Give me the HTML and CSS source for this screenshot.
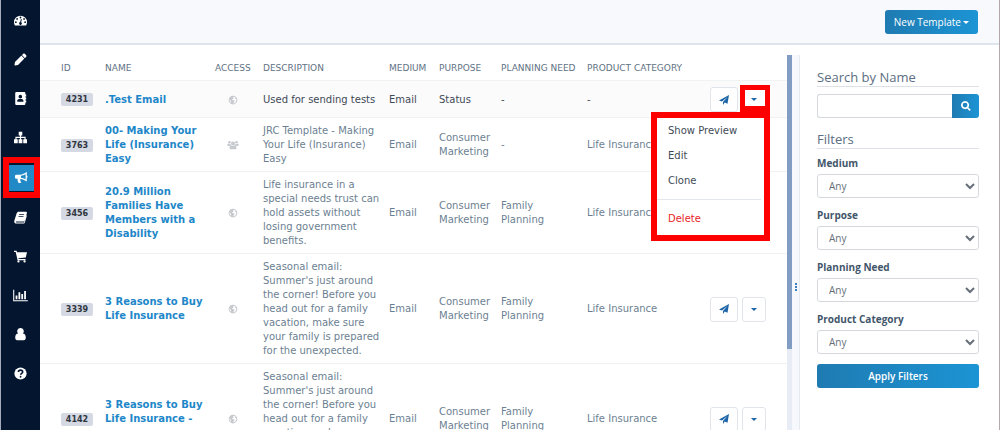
FILE: index.html
```html
<!DOCTYPE html>
<html lang="en">
<head>
<meta charset="utf-8">
<title>Templates</title>
<link rel="stylesheet" href="styles.css">
</head>
<body>
<svg class="sprite" aria-hidden="true">
  <symbol id="i-gauge" viewBox="0 0 16 16"><path fill-rule="evenodd" d="M8 2a8 8 0 0 0-8 8c0 1.500.4 2.900 1.100 4h13.800c.7-1.100 1.100-2.500 1.100-4a8 8 0 0 0-8-8zM8 3.200a1.100 1.100 0 1 1 0 2.200 1.100 1.100 0 0 1 0-2.200zM3.800 5a1.100 1.100 0 1 1 0 2.200 1.100 1.100 0 0 1 0-2.200zM12.400 5a1.100 1.100 0 1 1 0 2.200 1.100 1.100 0 0 1 0-2.200zM2.300 9a1.100 1.100 0 1 1 0 2.200 1.100 1.100 0 0 1 0-2.200zM13.700 9a1.100 1.100 0 1 1 0 2.200 1.100 1.100 0 0 1 0-2.200zM8.500 6.300l1.100.3-.8 3.500a1.700 1.700 0 1 1-1.200-.2z"/></symbol>
  <symbol id="i-pencil" viewBox="-20 -20 552 552"><path d="M497.900 142.100l-46.100 46.100c-4.700 4.700-12.300 4.700-17 0l-111-111c-4.700-4.700-4.700-12.300 0-17l46.100-46.100c18.700-18.700 49.100-18.700 67.900 0l60.100 60.100c18.800 18.700 18.800 49.100 0 67.900zM284.200 99.800L21.600 362.400.4 483.900c-2.900 16.400 11.400 30.600 27.800 27.800l121.500-21.300 262.600-262.600c4.700-4.700 4.700-12.300 0-17l-111-111c-4.800-4.700-12.400-4.700-17.100 0z"/></symbol>
  <symbol id="i-contacts" viewBox="0 0 16 16"><path fill-rule="evenodd" d="M3 0h9.500A1.500 1.500 0 0 1 14 1.500V3h1v2.500h-1v1.200h1v2.600h-1v1.200h1V13h-1v1.500a1.500 1.500 0 0 1-1.500 1.500H3a1.500 1.500 0 0 1-1.500-1.500v-13A1.500 1.500 0 0 1 3 0zm4.800 3.500a2.200 2.200 0 1 0 0 4.400 2.200 2.200 0 0 0 0-4.400zM4 12h7.600v-1.200c0-1.300-1-2.300-2.300-2.300h-3C5 8.500 4 9.500 4 10.800z"/></symbol>
  <symbol id="i-sitemap" viewBox="0 0 16 16"><path d="M5.800 1h4.400v4.400H8.700v1.800h5.600v3H16V15h-4.600v-4.800h1.500V8.600H8.700v1.600h1.600V15H5.700v-4.800h1.600V8.600H3.100v1.600h1.500V15H0v-4.800h1.700v-3h5.600V5.400H5.800z"/></symbol>
  <symbol id="i-bullhorn" viewBox="0 0 16 16"><path fill-rule="evenodd" d="M14.500 1v4.600a1.500 1.500 0 0 1 0 2.800V13c-2-1.800-4.800-3-7.500-3.300-.9.500-.8 1.400-.2 2-.5.900.2 1.500 1.100 2.200-.8 1-3 1-3.900.1-.5-1.500-1.200-2.800-.6-4.500H1.500A1.500 1.500 0 0 1 0 8V6a1.500 1.500 0 0 1 1.500-1.500H6C9 4.500 12.200 3 14.500 1zM13 3.900C11.200 5 9.300 5.700 7.300 5.900v2.300c2 .2 4 .9 5.700 2z"/></symbol>
  <symbol id="i-book" viewBox="0 0 16 16"><path fill-rule="evenodd" d="M5.800 1h9c.8 0 1.300.7 1.100 1.500l-2.800 9.300c-.2.700-.8 1.200-1.500 1.200H3c-1 0-1 .9-.1 1h9.500l1.700-5.500L15 4.500c.8.400.9 1 .7 1.700L13.400 14c-.2.800-.9 1.400-1.700 1.400H2.800C1 15.400-.2 13.600.4 12L3.300 2.900C3.700 1.700 4.600 1 5.800 1zM6.500 3.700l-.3 1h6l.3-1zM5.800 6.200l-.3 1h6l.3-1z"/></symbol>
  <symbol id="i-cart" viewBox="0 0 16 16"><path d="M0 1h3.200l.5 1.700H16l-1.500 6.400-9.100 1 .2 1h8.600v1.400H4.400L2.100 2.400H0z"/><circle cx="5.500" cy="14" r="1.400"/><circle cx="13" cy="14" r="1.400"/></symbol>
  <symbol id="i-chart" viewBox="0 0 18 16"><path d="M0 1h1.300v12.700H18V15H0zM3 8h2.200v4.700H3zM6.500 4h2.200v8.700H6.500zM10 6h2.200v6.700H10zM13.500 2.500h2.200v10.200h-2.200z"/></symbol>
  <symbol id="i-user" viewBox="0 0 16 16"><path d="M8 0a4 4 0 0 1 2.800 6.900C13.500 7 14.500 9 14.500 12c0 1.800-1 3-2.500 3H4c-1.500 0-2.500-1.200-2.500-3 0-3 1-5 3.700-5.100A4 4 0 0 1 8 0z"/></symbol>
  <symbol id="i-help" viewBox="0 0 16 16"><circle cx="8" cy="8" r="7.500"/><path class="cut" d="M5.400 6.200C5.500 4.600 6.600 3.900 8 3.900c1.500 0 2.700.8 2.700 2.200C10.700 7.800 8.200 7.800 8.200 9.500"/><circle class="dot" cx="8.100" cy="12" r="1.100"/></symbol>
  <symbol id="i-globe" viewBox="0 0 16 16"><path fill-rule="evenodd" d="M8 1a7 7 0 1 1 0 14A7 7 0 0 1 8 1zm1.500 1.600L8 4l1.300 1L7.500 6.200 6 7.500l2.500.3 2.200 1.700-1.500 2-1 2.200c4-.2 5.800-4 5-7.200L11 6l1-2zM2.500 6.500c-.4 2 .3 4.200 2 5.600L5 10 3.500 8.500z"/></symbol>
  <symbol id="i-group" viewBox="0 0 20 16"><circle cx="10" cy="5.500" r="3.300"/><circle cx="4" cy="3.500" r="2.200"/><circle cx="16" cy="3.500" r="2.200"/><path d="M7 8.500c2 1.600 4 1.600 6 0 2 .3 2.800 2.200 2.800 4.500 0 1.300-.8 2-2 2H6.200c-1.200 0-2-.7-2-2C4.200 10.700 5 8.800 7 8.500zM2 6c1.300.8 2.700.8 4 0 0 1 .2 1.500.7 2.200L4.500 9.500H2c-1 0-1.600-.5-1.600-1.400C.4 6.900.9 6 2 6zM18 6c-1.300.8-2.700.8-4 0 0 1-.2 1.500-.7 2.200l2.200 1.300H18c1 0 1.600-.5 1.600-1.400 0-1.200-.5-2.100-1.600-2.100z"/></symbol>
  <symbol id="i-send" viewBox="0 0 16 16"><path d="M16 0l-2.400 14-4.500-1.900L6.400 15.800V11.200L13.500 3.200 4.700 10.400 0 8.600z"/></symbol>
  <symbol id="i-search" viewBox="0 0 16 16"><path fill-rule="evenodd" d="M6.500 0a6.500 6.500 0 0 1 5.300 10.200l3.900 3.800-1.800 1.900L10 12A6.500 6.500 0 1 1 6.500 0zm0 2.700a3.800 3.800 0 1 0 0 7.600 3.800 3.800 0 0 0 0-7.600z"/></symbol>
  <symbol id="i-caret" viewBox="0 0 8 4"><path d="M0 0h8L4 4z"/></symbol>
</svg>

<div class="app">
  <nav class="sidebar" aria-label="Main">
    <a class="nav-item" href="#" aria-label="Dashboard"><span class="tile"><svg><use href="#i-gauge"/></svg></span></a>
    <a class="nav-item" href="#" aria-label="Edit"><span class="tile"><svg><use href="#i-pencil"/></svg></span></a>
    <a class="nav-item" href="#" aria-label="Contacts"><span class="tile"><svg><use href="#i-contacts"/></svg></span></a>
    <a class="nav-item" href="#" aria-label="Organization"><span class="tile"><svg><use href="#i-sitemap"/></svg></span></a>
    <a class="nav-item active" href="#" aria-label="Marketing" aria-current="page"><span class="tile"><svg><use href="#i-bullhorn"/></svg></span></a>
    <a class="nav-item" href="#" aria-label="Library"><span class="tile"><svg><use href="#i-book"/></svg></span></a>
    <a class="nav-item" href="#" aria-label="Store"><span class="tile"><svg><use href="#i-cart"/></svg></span></a>
    <a class="nav-item" href="#" aria-label="Reports"><span class="tile"><svg class="wide"><use href="#i-chart"/></svg></span></a>
    <a class="nav-item" href="#" aria-label="Account"><span class="tile"><svg><use href="#i-user"/></svg></span></a>
    <a class="nav-item" href="#" aria-label="Help"><span class="tile"><svg><use href="#i-help"/></svg></span></a>
  </nav>

  <div class="page">
    <header class="topbar">
      <button class="btn primary new" type="button">New Template <svg class="caret"><use href="#i-caret"/></svg></button>
    </header>

    <div class="content">
      <main class="list">
        <table class="templates">
          <colgroup>
            <col class="c-id"><col class="c-name"><col class="c-access"><col class="c-desc"><col class="c-medium"><col class="c-purpose"><col class="c-need"><col class="c-category"><col>
          </colgroup>
          <thead>
            <tr><th>ID</th><th>NAME</th><th>ACCESS</th><th>DESCRIPTION</th><th>MEDIUM</th><th>PURPOSE</th><th>PLANNING NEED</th><th>PRODUCT CATEGORY</th><th></th></tr>
          </thead>
          <tbody>
            <tr class="current">
              <td><span class="id">4231</span></td>
              <td><a href="#">.Test Email</a></td>
              <td class="access"><svg><use href="#i-globe"/></svg></td>
              <td>Used for sending tests</td><td>Email</td><td>Status</td><td>-</td><td>-</td>
              <td>
                <div class="actions">
                  <button class="btn icon send" type="button" aria-label="Send"><svg><use href="#i-send"/></svg></button>
                  <div class="dropdown open">
                    <button class="btn icon toggle" type="button" aria-label="More actions" aria-expanded="true"><svg class="caret"><use href="#i-caret"/></svg></button>
                    <div class="menu" role="menu">
                      <button type="button" role="menuitem">Show Preview</button>
                      <button type="button" role="menuitem">Edit</button>
                      <button type="button" role="menuitem">Clone</button>
                      <hr>
                      <button class="danger" type="button" role="menuitem">Delete</button>
                    </div>
                  </div>
                </div>
              </td>
            </tr>
            <tr>
              <td><span class="id">3763</span></td>
              <td><a href="#">00- Making Your Life (Insurance) Easy</a></td>
              <td class="access"><svg class="group"><use href="#i-group"/></svg></td>
              <td>JRC Template - Making Your Life (Insurance) Easy</td><td>Email</td><td>Consumer Marketing</td><td>-</td><td>Life Insurance</td>
              <td></td>
            </tr>
            <tr>
              <td><span class="id">3456</span></td>
              <td><a href="#">20.9 Million Families Have Members with a Disability</a></td>
              <td class="access"><svg><use href="#i-globe"/></svg></td>
              <td>Life insurance in a special needs trust can hold assets without losing government benefits.</td><td>Email</td><td>Consumer Marketing</td><td>Family Planning</td><td>Life Insurance</td>
              <td></td>
            </tr>
            <tr>
              <td><span class="id">3339</span></td>
              <td><a href="#">3 Reasons to Buy Life Insurance</a></td>
              <td class="access"><svg><use href="#i-globe"/></svg></td>
              <td>Seasonal email: Summer's just around the corner! Before you head out for a family vacation, make sure your family is prepared for the unexpected.</td><td>Email</td><td>Consumer Marketing</td><td>Family Planning</td><td>Life Insurance</td>
              <td>
                <div class="actions">
                  <button class="btn icon send" type="button" aria-label="Send"><svg><use href="#i-send"/></svg></button>
                  <button class="btn icon toggle" type="button" aria-label="More actions"><svg class="caret"><use href="#i-caret"/></svg></button>
                </div>
              </td>
            </tr>
            <tr>
              <td><span class="id">4142</span></td>
              <td><a href="#">3 Reasons to Buy Life Insurance - summer</a></td>
              <td class="access"><svg><use href="#i-globe"/></svg></td>
              <td>Seasonal email: Summer's just around the corner! Before you head out for a family vacation, make sure your family is prepared for the unexpected.</td><td>Email</td><td>Consumer Marketing</td><td>Family Planning</td><td>Life Insurance</td>
              <td>
                <div class="actions">
                  <button class="btn icon send" type="button" aria-label="Send"><svg><use href="#i-send"/></svg></button>
                  <button class="btn icon toggle" type="button" aria-label="More actions"><svg class="caret"><use href="#i-caret"/></svg></button>
                </div>
              </td>
            </tr>
          </tbody>
        </table>
      </main>

      <div class="scrollbar"><div class="thumb"></div></div>
      <div class="splitter"><i></i><i></i><i></i></div>

      <aside class="filters">
        <h2><label for="search">Search by Name</label></h2>
        <div class="search">
          <input id="search" type="text">
          <button class="btn primary" type="button" aria-label="Search"><svg><use href="#i-search"/></svg></button>
        </div>
        <h2>Filters</h2>
        <div class="field"><label for="medium">Medium</label><select id="medium"><option>Any</option></select></div>
        <div class="field"><label for="purpose">Purpose</label><select id="purpose"><option>Any</option></select></div>
        <div class="field"><label for="need">Planning Need</label><select id="need"><option>Any</option></select></div>
        <div class="field"><label for="category">Product Category</label><select id="category"><option>Any</option></select></div>
        <button class="btn primary apply" type="button">Apply Filters</button>
      </aside>
    </div>
  </div>
</div>
</body>
</html>
```
FILE: styles.css
```css
* { box-sizing: border-box; }

body {
  margin: 0;
  font-family: "Open Sans", sans-serif;
  font-size: 10px;
  line-height: 14px;
  color: #6c7f92;
  background: #fff;
}

svg { fill: currentColor; display: block; }
.sprite { display: none; }

.app {
  display: flex;
  height: 100vh;
  overflow: hidden;
  border-left: 1px solid #a3abba;
  border-right: 1px solid #b3a8ab;
}

/* Sidebar */
.sidebar {
  flex: none;
  width: 39px;
  padding-top: 1px;
  background: #04162f;
}
.nav-item {
  display: flex;
  align-items: center;
  justify-content: center;
  height: 39px;
  color: #fff;
}
.tile {
  display: grid;
  place-items: center;
  width: 26px;
  height: 26px;
}
.tile svg { width: 13px; height: 13px; }
.tile .wide { width: 15px; }
.nav-item.active {
  height: 41px;
  margin-left: 2px;
  border: 6px solid #fe0000;
}
.nav-item.active .tile { background: #2189c6; }
.cut { fill: none; stroke: #04162f; stroke-width: 2; }
.dot { fill: #04162f; }

/* Page */
.page {
  flex: 1;
  min-width: 0;
  display: flex;
  flex-direction: column;
}
.topbar {
  display: flex;
  justify-content: flex-end;
  padding: 10px 21px 9px;
  background: #f7f9fd;
  border-bottom: 2px solid #e0e4ec;
}
.content {
  flex: 1;
  min-height: 0;
  display: flex;
  padding-top: 10px;
}

/* Buttons */
.btn {
  display: flex;
  align-items: center;
  justify-content: center;
  height: 24px;
  padding: 0;
  border: 1px solid #e1e5eb;
  border-radius: 3px;
  background: #fff;
  color: #1c65a8;
  font: 600 10px/14px "Open Sans", sans-serif;
}
.btn.primary {
  border: 0;
  color: #fff;
  background: linear-gradient(90deg, #1f7bb2, #1c94d4);
}
.btn.new { gap: 2px; padding: 0 9px; font-weight: 400; }
.btn.icon { height: 25px; }
.caret { width: 6px; height: 3px; }

/* Template list */
.list { flex: 1; min-width: 0; overflow: hidden; }
.templates {
  width: 100%;
  table-layout: fixed;
  border-spacing: 0;
  font-family: "DejaVu Sans", sans-serif;
}
.c-id { width: 65px; }
.c-name { width: 110px; }
.c-access { width: 48px; }
.c-desc { width: 126px; }
.c-medium { width: 50px; }
.c-purpose { width: 62px; }
.c-need { width: 86px; }
.c-category { width: 100px; }

.templates th {
  height: 26px;
  padding: 0;
  border-bottom: 1px solid #f1f2f4;
  font-size: 9px;
  font-weight: 400;
  text-align: left;
  white-space: nowrap;
  color: #5f7284;
}
.templates td {
  padding: 6px 8px 5px 0;
  border-bottom: 1px solid #f0f1f3;
}
.templates th:first-child,
.templates td:first-child { padding-left: 21px; }
.templates td:last-child { padding-right: 21px; }
.templates a { color: #1e87c9; font-weight: 700; text-decoration: none; }
.current td { background: #fbfbfc; color: #3f4a56; }

.id {
  display: block;
  width: 32px;
  border-radius: 2px;
  background: #d5d9e3;
  color: #2f3640;
  font-size: 8px;
  font-weight: 700;
  line-height: 13px;
  text-align: center;
}
.access svg { width: 10px; height: 10px; margin-left: 13px; color: #c6cacf; }
.access .group { width: 12px; margin-left: 12px; }

.actions { display: flex; justify-content: flex-end; gap: 4px; }
.send { width: 28px; }
.send svg { width: 10px; height: 10px; }
.toggle { width: 24px; }

/* Open drop-down */
.dropdown { position: relative; }
.dropdown.open::after {
  content: "";
  position: absolute;
  inset: -2px -4px 0 -2px;
  border: 5px solid #fe0000;
  border-bottom-width: 6px;
  pointer-events: none;
}
.menu {
  position: absolute;
  top: 100%;
  right: -4px;
  z-index: 1;
  width: 119px;
  height: 129px;
  border: 6px solid #fe0000;
  background: #fff;
}
.menu button {
  display: block;
  width: 100%;
  height: 25px;
  padding: 0 11px;
  border: 0;
  background: none;
  color: #414b56;
  font: 400 10px/14px "DejaVu Sans", sans-serif;
  text-align: left;
}
.menu hr { margin: 6px 3px 6px 0; border: 0; border-top: 1px solid #e3e7ec; }
.menu .danger { color: #e8262a; }

/* Scrollbar and splitter */
.scrollbar { flex: none; width: 5px; background: #e8edf5; }
.thumb { height: 294px; background: #819dc4; }
.splitter {
  flex: none;
  display: flex;
  flex-direction: column;
  align-items: center;
  padding-top: 228px;
  gap: 1px;
  width: 8px;
  background: #f6f8fc;
  border-right: 1px solid #e6eaf1;
}
.splitter i { width: 2px; height: 2px; background: #3f7fc0; }

/* Filters */
.filters {
  flex: none;
  width: 199px;
  padding: 13px 20px 0 17px;
}
.filters h2 {
  margin: 0 0 7px;
  border-bottom: 1px solid #dde1e7;
  font-size: 13px;
  font-weight: 400;
  line-height: 18px;
  color: #5b6e82;
}
.search { display: flex; margin-bottom: 12px; }
.search input {
  flex: 1;
  min-width: 0;
  height: 24px;
  padding: 0 8px;
  border: 1px solid #d5d9df;
  border-right: 0;
  border-radius: 3px 0 0 3px;
}
.search .btn { width: 27px; border-radius: 0 3px 3px 0; }
.search svg { width: 10px; height: 10px; }
.field { display: flex; flex-direction: column; gap: 4px; margin-bottom: 10px; }
.field label { font-weight: 700; color: #42566b; }
.field select {
  height: 24px;
  padding: 0 0 0 7px;
  border: 1px solid #d5d9df;
  border-radius: 3px;
  background: #fff;
  color: #666f79;
  font: 400 10px/14px "Open Sans", sans-serif;
}
.apply { width: 100%; }
```
